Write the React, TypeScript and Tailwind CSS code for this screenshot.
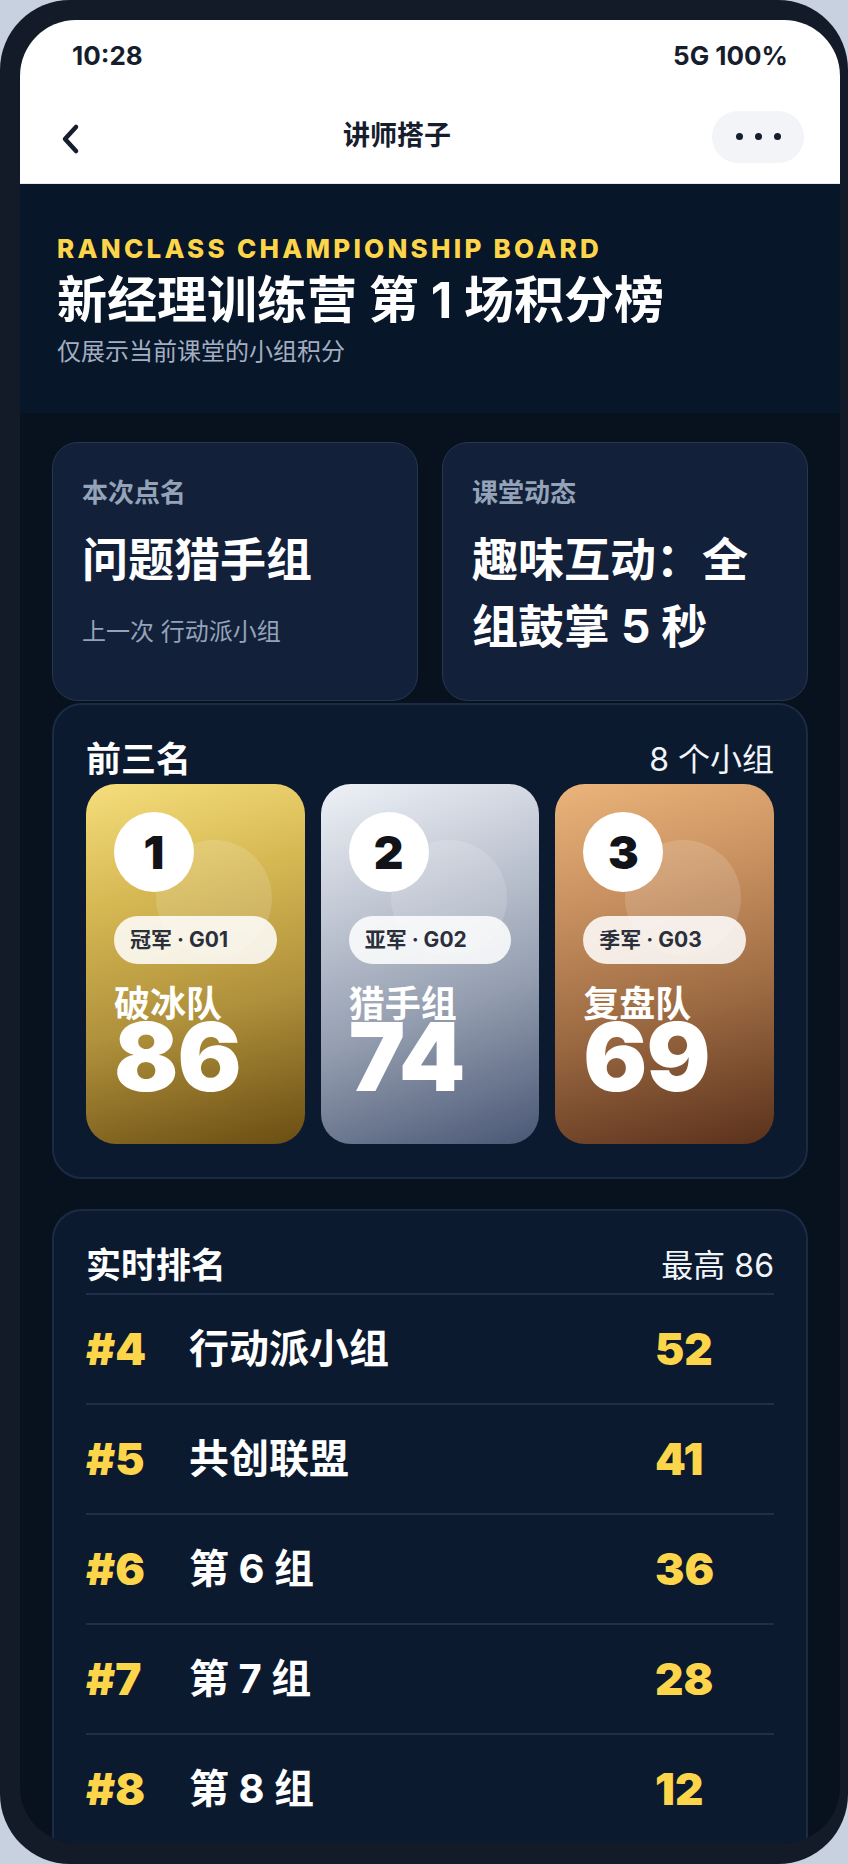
import { FC } from "react";

type Podium = {
  rank: number;
  tag: string;
  name: string;
  score: number;
  bg: string;
};

const podium: Podium[] = [
  {
    rank: 1,
    tag: "冠军 · G01",
    name: "破冰队",
    score: 86,
    bg: "bg-[linear-gradient(165deg,#f5de7c_0%,#d6b853_30%,#b0913c_62%,#6a4d12_100%)]",
  },
  {
    rank: 2,
    tag: "亚军 · G02",
    name: "猎手组",
    score: 74,
    bg: "bg-[linear-gradient(160deg,#eef1f7_0%,#c3c9d5_30%,#939daf_62%,#4a5775_100%)]",
  },
  {
    rank: 3,
    tag: "季军 · G03",
    name: "复盘队",
    score: 69,
    bg: "bg-[linear-gradient(165deg,#eab47b_0%,#c99160_30%,#9c6a42_62%,#5a311c_100%)]",
  },
];

const rows = [
  { rank: 4, name: "行动派小组", score: 52 },
  { rank: 5, name: "共创联盟", score: 41 },
  { rank: 6, name: "第 6 组", score: 36 },
  { rank: 7, name: "第 7 组", score: 28 },
  { rank: 8, name: "第 8 组", score: 12 },
];

const PodiumCard: FC<{ item: Podium }> = ({ item }) => (
  <div className={`relative h-[360px] overflow-hidden rounded-[30px] p-[28px] ${item.bg}`}>
    <div className="absolute left-[70px] top-[56px] h-[116px] w-[116px] rounded-full bg-white/15" />
    <div className="relative flex flex-col">
      <div className="flex h-[80px] w-[80px] items-center justify-center rounded-full bg-white text-[46px] font-black leading-none text-[#111318]">
        {item.rank}
      </div>
      <div className="mt-[24px] flex h-[48px] w-full items-center rounded-full bg-white/85 px-4 text-[21px] font-bold text-[#2a2f3a]">
        {item.tag}
      </div>
      <div className="mt-[22px] text-[36px] font-bold leading-none text-white">{item.name}</div>
      <div className="-mt-[13px] text-[95px] font-black leading-none tracking-[-1px] text-white">
        {item.score}
      </div>
    </div>
  </div>
);

export default function App() {
  return (
    <div className="h-[1864px] w-[848px] overflow-hidden bg-[#c8d1df] font-['Inter','Noto_Sans_CJK_SC',sans-serif]">
      <div className="h-[1864px] w-[848px] rounded-[70px] bg-[#131a28] pl-[20px] pt-[20px]">
        <div className="flex h-[1823px] w-[820px] flex-col overflow-hidden rounded-[56px] bg-[#08121f]">
          {/* white top bar */}
          <div className="border-b border-[#e6e9ef] bg-white">
            <div className="flex h-[70px] items-center justify-between px-[52px] text-[26px] font-bold text-[#161d2d]">
              <span>10:28</span>
              <span>5G 100%</span>
            </div>
            <div className="flex h-[93px] items-center pl-[38px] pr-[36px]">
              <svg width="24" height="32" viewBox="0 0 24 32" fill="none" className="mt-[4px]">
                <path d="M18 4 L7 16 L18 28" stroke="#161d2d" strokeWidth="4.5" strokeLinecap="round" strokeLinejoin="round" />
              </svg>
              <div className="flex-1 text-center text-[27px] font-bold text-[#161d2d]">讲师搭子</div>
              <button className="flex h-[52px] w-[92px] items-center justify-center gap-[12px] rounded-full bg-[#f3f4f8]">
                <span className="h-[7px] w-[7px] rounded-full bg-[#161d2d]" />
                <span className="h-[7px] w-[7px] rounded-full bg-[#161d2d]" />
                <span className="h-[7px] w-[7px] rounded-full bg-[#161d2d]" />
              </button>
            </div>
          </div>

          {/* hero */}
          <div className="bg-[#071629] px-[37px] pb-[44px] pt-[52px]">
            <div className="text-[26px] font-extrabold leading-none tracking-[0.125em] text-[#fdd54a]">
              RANCLASS CHAMPIONSHIP BOARD
            </div>
            <div className="mt-2 text-[50px] font-bold leading-[1.2] text-white">新经理训练营 第 1 场积分榜</div>
            <div className="mt-[5px] text-[24px] leading-[1.4] text-[#a3aec2]">仅展示当前课堂的小组积分</div>
          </div>

          <div className="flex flex-col px-8 pt-[29px]">
            {/* two info cards */}
            <div className="grid grid-cols-2 gap-6">
              <div className="h-[259px] rounded-[26px] border border-[#26364f] bg-[#13203a] px-[29px] pt-8">
                <div className="text-[26px] font-bold leading-[1.35] text-[#94a3b8]">本次点名</div>
                <div className="mt-4 text-[46px] font-bold leading-[67px] text-white">问题猎手组</div>
                <div className="mt-[22px] text-[24px] leading-[1.4] text-[#94a3b8]">上一次 行动派小组</div>
              </div>
              <div className="h-[259px] rounded-[26px] border border-[#26364f] bg-[#13203a] px-[29px] pt-8">
                <div className="text-[26px] font-bold leading-[1.35] text-[#94a3b8]">课堂动态</div>
                <div className="mt-4 text-[46px] font-bold leading-[67px] text-white">趣味互动：全组鼓掌 5 秒</div>
              </div>
            </div>

            {/* top three */}
            <div className="mt-[2px] rounded-[30px] border-2 border-[#1c2b45] bg-[#0c1a30] px-8 pb-[33px] pt-8">
              <div className="flex items-center justify-between">
                <span className="text-[35px] font-bold leading-[1.3] text-white">前三名</span>
                <span className="text-[32px] leading-[1.3] text-[#f1f5f9]">8 个小组</span>
              </div>
              <div className="mt-[2px] grid grid-cols-3 gap-4">
                {podium.map((p) => (
                  <PodiumCard key={p.rank} item={p} />
                ))}
              </div>
            </div>

            {/* live ranking */}
            <div className="mt-[30px] rounded-t-[30px] border-2 border-b-0 border-[#1c2b45] bg-[#0c1a30] px-8 pt-8">
              <div className="flex items-center justify-between border-b-2 border-[#1f2e49] pb-[4px]">
                <span className="text-[35px] font-bold leading-[1.3] text-white">实时排名</span>
                <span className="text-[32px] leading-[1.3] text-[#f1f5f9]">最高 86</span>
              </div>
              {rows.map((r) => (
                <div
                  key={r.rank}
                  className="grid h-[110px] grid-cols-[103px_1fr_119px] items-center border-b-2 border-[#1f2e49]"
                >
                  <span className="text-[44px] font-black leading-none text-[#fdd54a]">#{r.rank}</span>
                  <span className="text-[40px] font-bold leading-none text-white">{r.name}</span>
                  <span className="text-[44px] font-black leading-none text-[#fdd54a]">{r.score}</span>
                </div>
              ))}
            </div>
          </div>
        </div>
      </div>
    </div>
  );
}
